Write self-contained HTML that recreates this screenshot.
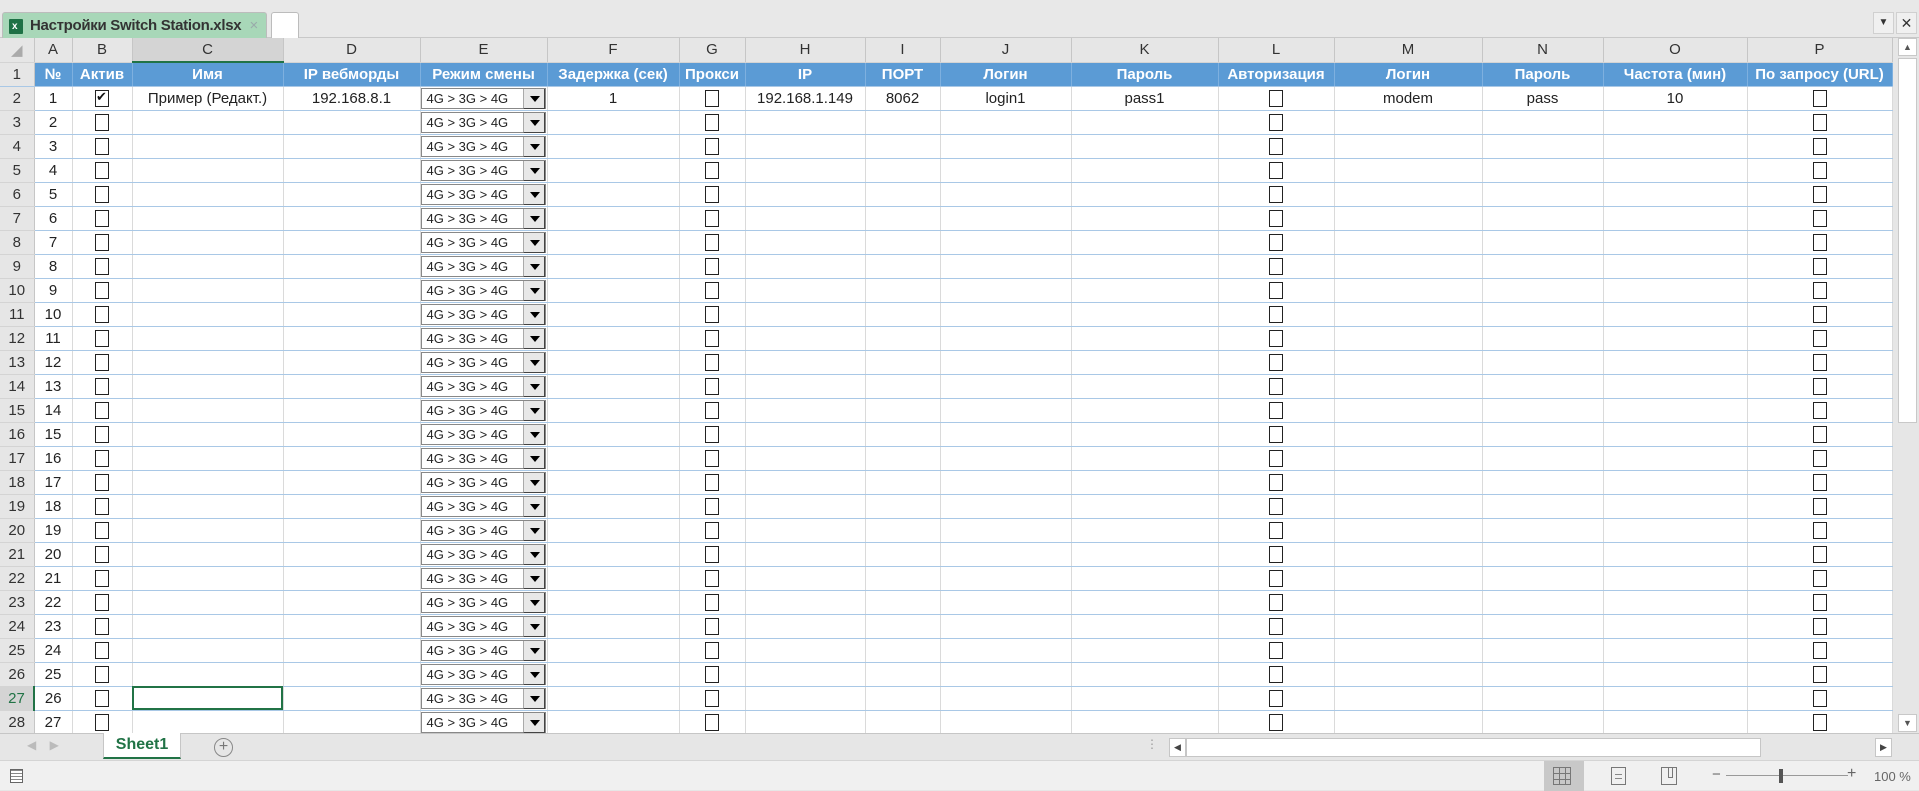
<!DOCTYPE html>
<html><head><meta charset="utf-8"><style>
*{box-sizing:border-box;margin:0;padding:0}
body{width:1919px;height:790px;overflow:hidden;background:#e6e6e6;font-family:"Liberation Sans","DejaVu Sans",sans-serif;position:relative}
.tabbar{position:absolute;left:0;top:0;width:1919px;height:38px;background:#e8e8e8;border-bottom:1px solid #c8c8c8}
.ftab{position:absolute;left:2px;top:12px;width:265px;height:27px;background:#a8d7b8;border:1px solid #bcbcbc;border-bottom:none;border-radius:3px 3px 0 0;font-size:15px;font-weight:bold;color:#333;line-height:25px;padding-left:27px;letter-spacing:-0.3px}
.ftab .ic{position:absolute;left:6px;top:6px;width:14px;height:15px;background:#1e7145;border-radius:1px}
.ftab .ic:after{content:"x";position:absolute;left:3px;top:-5px;color:#fff;font-size:10px}
.ftab .x{position:absolute;right:8px;top:0;color:#9aa;font-weight:normal}
.ntab{position:absolute;left:271px;top:12px;width:28px;height:27px;background:#fff;border:1px solid #bcbcbc;border-bottom:none;border-radius:3px 3px 0 0}
.tb{position:absolute;top:12px;width:21px;height:22px;background:#f0f0f0;border:1px solid #d0d0d0;text-align:center;font-size:14px;line-height:20px;color:#333}
table{position:absolute;left:0;top:38px;border-collapse:collapse;table-layout:fixed;width:1892px;background:#fff;font-size:15px;color:#222}
td,th{height:24px;padding:0;text-align:center;white-space:nowrap;overflow:visible;border-right:1px solid #dadada;border-bottom:1px solid #a9c8e6;font-weight:normal}
tr td:first-child,th{background:#e6e6e6;color:#333;border-right:1px solid #c6c6c6;border-bottom:1px solid #d4d4d4}
tr.ch th{font-size:15px;background:#e6e6e6;color:#333}
tr.ch th.sel{background:#d4d4d4;border-bottom:2px solid #217346}
tr.h td{background:#5b9bd5;color:#fff;font-weight:bold;border-color:#5b9bd5;border-right:1px solid #7eb0df;border-bottom:1px solid #a9c8e6}
tr.h td:first-child{background:#e6e6e6;color:#333;font-weight:normal;border-right:1px solid #c6c6c6}
i{display:inline-block;width:14px;height:17px;border:1.5px solid #222;vertical-align:middle;background:#fff;position:relative}
i.c:after{content:"✔";position:absolute;left:0;top:-2px;font-style:normal;font-size:13px;color:#111}
.e{position:relative}
.dd{position:absolute;left:0;top:1px;width:125px;height:21px;border:1px solid #888;background:#fff;font-size:13px;text-align:left;padding-left:5px;line-height:19px;color:#222}
.dd:after{content:"";position:absolute;right:0;top:0;width:20px;height:19px;background:#e8e8e8;border-left:1px solid #aaa;border-right:1px solid #444;border-bottom:1px solid #444}
.dd:before{content:"";position:absolute;right:5px;top:7px;border-left:5px solid transparent;border-right:5px solid transparent;border-top:6px solid #000;z-index:2}
.selc{outline:2px solid #217346;outline-offset:-2px}
.vs{position:absolute;left:1896px;top:38px;width:23px;height:695px;background:#e6e6e6}
.vs .th{position:absolute;left:2px;top:20px;width:19px;height:365px;background:#fff;border:1px solid #c8c8c8}
.vs .a{position:absolute;left:2px;width:19px;height:18px;background:#fff;border:1px solid #c8c8c8;font-size:9px;text-align:center;line-height:16px;color:#555}
.bot{position:absolute;left:0;top:733px;width:1919px;height:27px;background:#e6e6e6;border-top:1px solid #c6c6c6}
.sheet{position:absolute;left:103px;top:-1px;width:78px;height:26px;background:#fff;border-bottom:2px solid #217346;border-left:1px solid #c6c6c6;border-right:1px solid #c6c6c6;color:#217346;font-weight:bold;font-size:16px;text-align:center;line-height:24px}
.status{position:absolute;left:0;top:760px;width:1919px;height:30px;background:#f0f0f0;border-top:1px solid #d4d4d4;font-size:13px;color:#555}
</style></head><body>
<div class="tabbar">
<div class="ftab"><span class="ic"></span>Настройки Switch Station.xlsx<span class="x">×</span></div>
<div class="ntab"></div>
<div class="tb" style="left:1873px;font-size:10px">▼</div>
<div class="tb" style="left:1896px">✕</div>
</div>
<table>
<colgroup><col style="width:34px"><col style="width:38px"><col style="width:60px"><col style="width:151px"><col style="width:137px"><col style="width:127px"><col style="width:132px"><col style="width:66px"><col style="width:120px"><col style="width:75px"><col style="width:131px"><col style="width:147px"><col style="width:116px"><col style="width:148px"><col style="width:121px"><col style="width:144px"><col style="width:145px"></colgroup>
<tr class="ch"><th style="color:#aaa">◢</th><th>A</th><th>B</th><th class="sel">C</th><th>D</th><th>E</th><th>F</th><th>G</th><th>H</th><th>I</th><th>J</th><th>K</th><th>L</th><th>M</th><th>N</th><th>O</th><th>P</th></tr>
<tr class="h"><td>1</td><td>№</td><td>Актив</td><td>Имя</td><td>IP вебморды</td><td>Режим смены</td><td>Задержка (сек)</td><td>Прокси</td><td>IP</td><td>ПОРТ</td><td>Логин</td><td>Пароль</td><td>Авторизация</td><td>Логин</td><td>Пароль</td><td>Частота (мин)</td><td>По запросу (URL)</td></tr>
<tr><td>2</td><td>1</td><td><i class="c"></i></td><td>Пример (Редакт.)</td><td>192.168.8.1</td><td class="e"><div class="dd">4G &gt; 3G &gt; 4G</div></td><td>1</td><td><i></i></td><td>192.168.1.149</td><td>8062</td><td>login1</td><td>pass1</td><td><i></i></td><td>modem</td><td>pass</td><td>10</td><td><i></i></td></tr>
<tr><td>3</td><td>2</td><td><i></i></td><td></td><td></td><td class="e"><div class="dd">4G &gt; 3G &gt; 4G</div></td><td></td><td><i></i></td><td></td><td></td><td></td><td></td><td><i></i></td><td></td><td></td><td></td><td><i></i></td></tr>
<tr><td>4</td><td>3</td><td><i></i></td><td></td><td></td><td class="e"><div class="dd">4G &gt; 3G &gt; 4G</div></td><td></td><td><i></i></td><td></td><td></td><td></td><td></td><td><i></i></td><td></td><td></td><td></td><td><i></i></td></tr>
<tr><td>5</td><td>4</td><td><i></i></td><td></td><td></td><td class="e"><div class="dd">4G &gt; 3G &gt; 4G</div></td><td></td><td><i></i></td><td></td><td></td><td></td><td></td><td><i></i></td><td></td><td></td><td></td><td><i></i></td></tr>
<tr><td>6</td><td>5</td><td><i></i></td><td></td><td></td><td class="e"><div class="dd">4G &gt; 3G &gt; 4G</div></td><td></td><td><i></i></td><td></td><td></td><td></td><td></td><td><i></i></td><td></td><td></td><td></td><td><i></i></td></tr>
<tr><td>7</td><td>6</td><td><i></i></td><td></td><td></td><td class="e"><div class="dd">4G &gt; 3G &gt; 4G</div></td><td></td><td><i></i></td><td></td><td></td><td></td><td></td><td><i></i></td><td></td><td></td><td></td><td><i></i></td></tr>
<tr><td>8</td><td>7</td><td><i></i></td><td></td><td></td><td class="e"><div class="dd">4G &gt; 3G &gt; 4G</div></td><td></td><td><i></i></td><td></td><td></td><td></td><td></td><td><i></i></td><td></td><td></td><td></td><td><i></i></td></tr>
<tr><td>9</td><td>8</td><td><i></i></td><td></td><td></td><td class="e"><div class="dd">4G &gt; 3G &gt; 4G</div></td><td></td><td><i></i></td><td></td><td></td><td></td><td></td><td><i></i></td><td></td><td></td><td></td><td><i></i></td></tr>
<tr><td>10</td><td>9</td><td><i></i></td><td></td><td></td><td class="e"><div class="dd">4G &gt; 3G &gt; 4G</div></td><td></td><td><i></i></td><td></td><td></td><td></td><td></td><td><i></i></td><td></td><td></td><td></td><td><i></i></td></tr>
<tr><td>11</td><td>10</td><td><i></i></td><td></td><td></td><td class="e"><div class="dd">4G &gt; 3G &gt; 4G</div></td><td></td><td><i></i></td><td></td><td></td><td></td><td></td><td><i></i></td><td></td><td></td><td></td><td><i></i></td></tr>
<tr><td>12</td><td>11</td><td><i></i></td><td></td><td></td><td class="e"><div class="dd">4G &gt; 3G &gt; 4G</div></td><td></td><td><i></i></td><td></td><td></td><td></td><td></td><td><i></i></td><td></td><td></td><td></td><td><i></i></td></tr>
<tr><td>13</td><td>12</td><td><i></i></td><td></td><td></td><td class="e"><div class="dd">4G &gt; 3G &gt; 4G</div></td><td></td><td><i></i></td><td></td><td></td><td></td><td></td><td><i></i></td><td></td><td></td><td></td><td><i></i></td></tr>
<tr><td>14</td><td>13</td><td><i></i></td><td></td><td></td><td class="e"><div class="dd">4G &gt; 3G &gt; 4G</div></td><td></td><td><i></i></td><td></td><td></td><td></td><td></td><td><i></i></td><td></td><td></td><td></td><td><i></i></td></tr>
<tr><td>15</td><td>14</td><td><i></i></td><td></td><td></td><td class="e"><div class="dd">4G &gt; 3G &gt; 4G</div></td><td></td><td><i></i></td><td></td><td></td><td></td><td></td><td><i></i></td><td></td><td></td><td></td><td><i></i></td></tr>
<tr><td>16</td><td>15</td><td><i></i></td><td></td><td></td><td class="e"><div class="dd">4G &gt; 3G &gt; 4G</div></td><td></td><td><i></i></td><td></td><td></td><td></td><td></td><td><i></i></td><td></td><td></td><td></td><td><i></i></td></tr>
<tr><td>17</td><td>16</td><td><i></i></td><td></td><td></td><td class="e"><div class="dd">4G &gt; 3G &gt; 4G</div></td><td></td><td><i></i></td><td></td><td></td><td></td><td></td><td><i></i></td><td></td><td></td><td></td><td><i></i></td></tr>
<tr><td>18</td><td>17</td><td><i></i></td><td></td><td></td><td class="e"><div class="dd">4G &gt; 3G &gt; 4G</div></td><td></td><td><i></i></td><td></td><td></td><td></td><td></td><td><i></i></td><td></td><td></td><td></td><td><i></i></td></tr>
<tr><td>19</td><td>18</td><td><i></i></td><td></td><td></td><td class="e"><div class="dd">4G &gt; 3G &gt; 4G</div></td><td></td><td><i></i></td><td></td><td></td><td></td><td></td><td><i></i></td><td></td><td></td><td></td><td><i></i></td></tr>
<tr><td>20</td><td>19</td><td><i></i></td><td></td><td></td><td class="e"><div class="dd">4G &gt; 3G &gt; 4G</div></td><td></td><td><i></i></td><td></td><td></td><td></td><td></td><td><i></i></td><td></td><td></td><td></td><td><i></i></td></tr>
<tr><td>21</td><td>20</td><td><i></i></td><td></td><td></td><td class="e"><div class="dd">4G &gt; 3G &gt; 4G</div></td><td></td><td><i></i></td><td></td><td></td><td></td><td></td><td><i></i></td><td></td><td></td><td></td><td><i></i></td></tr>
<tr><td>22</td><td>21</td><td><i></i></td><td></td><td></td><td class="e"><div class="dd">4G &gt; 3G &gt; 4G</div></td><td></td><td><i></i></td><td></td><td></td><td></td><td></td><td><i></i></td><td></td><td></td><td></td><td><i></i></td></tr>
<tr><td>23</td><td>22</td><td><i></i></td><td></td><td></td><td class="e"><div class="dd">4G &gt; 3G &gt; 4G</div></td><td></td><td><i></i></td><td></td><td></td><td></td><td></td><td><i></i></td><td></td><td></td><td></td><td><i></i></td></tr>
<tr><td>24</td><td>23</td><td><i></i></td><td></td><td></td><td class="e"><div class="dd">4G &gt; 3G &gt; 4G</div></td><td></td><td><i></i></td><td></td><td></td><td></td><td></td><td><i></i></td><td></td><td></td><td></td><td><i></i></td></tr>
<tr><td>25</td><td>24</td><td><i></i></td><td></td><td></td><td class="e"><div class="dd">4G &gt; 3G &gt; 4G</div></td><td></td><td><i></i></td><td></td><td></td><td></td><td></td><td><i></i></td><td></td><td></td><td></td><td><i></i></td></tr>
<tr><td>26</td><td>25</td><td><i></i></td><td></td><td></td><td class="e"><div class="dd">4G &gt; 3G &gt; 4G</div></td><td></td><td><i></i></td><td></td><td></td><td></td><td></td><td><i></i></td><td></td><td></td><td></td><td><i></i></td></tr>
<tr><td style="color:#217346;background:#d4d4d4;border-right:2px solid #217346">27</td><td>26</td><td><i></i></td><td class="selc"></td><td></td><td class="e"><div class="dd">4G &gt; 3G &gt; 4G</div></td><td></td><td><i></i></td><td></td><td></td><td></td><td></td><td><i></i></td><td></td><td></td><td></td><td><i></i></td></tr>
<tr><td>28</td><td>27</td><td><i></i></td><td></td><td></td><td class="e"><div class="dd">4G &gt; 3G &gt; 4G</div></td><td></td><td><i></i></td><td></td><td></td><td></td><td></td><td><i></i></td><td></td><td></td><td></td><td><i></i></td></tr>
</table>
<div class="vs"><div class="a" style="top:0">▲</div><div class="th"></div><div class="a" style="top:676px">▼</div></div>
<div class="bot">
<span style="position:absolute;left:27px;top:4px;color:#bbb;font-size:12px">◀&nbsp;&nbsp;&nbsp;&nbsp;▶</span>
<div class="sheet">Sheet1</div>
<div style="position:absolute;left:214px;top:4px;width:19px;height:19px;border:1.5px solid #888;border-radius:50%;text-align:center;line-height:16px;color:#777;font-size:16px">+</div>
<span style="position:absolute;left:1146px;top:3px;color:#999;font-size:12px">⋮</span>
<div style="position:absolute;left:1169px;top:4px;width:17px;height:19px;background:#fff;border:1px solid #c6c6c6;font-size:9px;text-align:center;line-height:17px;color:#444">◀</div>
<div style="position:absolute;left:1186px;top:4px;width:575px;height:19px;background:#fff;border:1px solid #c6c6c6"></div>
<div style="position:absolute;left:1875px;top:4px;width:17px;height:19px;background:#fff;border:1px solid #c6c6c6;font-size:9px;text-align:center;line-height:17px;color:#444">▶</div>
</div>
<div class="status">
<div style="position:absolute;left:10px;top:8px;width:13px;height:14px;border:1px solid #666;background:repeating-linear-gradient(0deg,#fff 0 2px,#888 2px 3px)"></div>
<div style="position:absolute;left:1544px;top:0;width:40px;height:30px;background:#c8c8c8"></div>
<div style="position:absolute;left:1553px;top:6px;width:18px;height:18px;border:1px solid #777;background:linear-gradient(#777,#777) 5px 0/1px 100% no-repeat,linear-gradient(#777,#777) 11px 0/1px 100% no-repeat,linear-gradient(#777,#777) 0 5px/100% 1px no-repeat,linear-gradient(#777,#777) 0 11px/100% 1px no-repeat"></div>
<div style="position:absolute;left:1611px;top:6px;width:15px;height:18px;border:1px solid #777;background:repeating-linear-gradient(0deg,transparent 0 3px,#888 3px 4px) 3px 3px/7px 11px no-repeat"></div>
<div style="position:absolute;left:1661px;top:6px;width:16px;height:18px;border:1px solid #777"><div style="position:absolute;left:6px;top:0;width:5px;height:10px;border:1px solid #777;border-top:none"></div></div>
<span style="position:absolute;left:1712px;top:5px;font-size:15px;color:#666">−</span>
<div style="position:absolute;left:1726px;top:14px;width:122px;height:1px;background:#999"></div>
<div style="position:absolute;left:1779px;top:8px;width:4px;height:14px;background:#555"></div>
<span style="position:absolute;left:1847px;top:4px;font-size:16px;color:#666">+</span>
<span style="position:absolute;left:1874px;top:8px;font-size:13px;color:#666">100 %</span>
</div>
</body></html>
